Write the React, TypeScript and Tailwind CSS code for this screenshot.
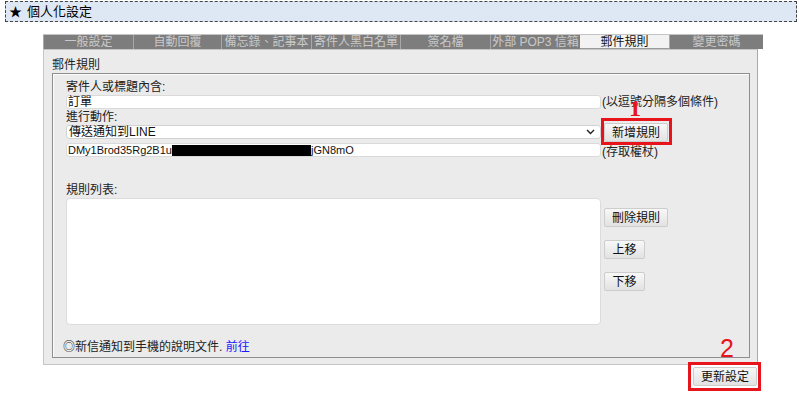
import React from "react";

const font = { fontFamily: '"Liberation Sans", "Noto Sans CJK TC", sans-serif' };

const tabs: { label: string; w: string; active?: boolean }[] = [
  { label: "一般設定", w: "w-[90px]" },
  { label: "自動回覆", w: "w-[88px]" },
  { label: "備忘錄、記事本", w: "w-[90px]" },
  { label: "寄件人黑白名單", w: "w-[89px]" },
  { label: "簽名檔", w: "w-[90px]" },
  { label: "外部 POP3 信箱", w: "w-[90px]" },
  { label: "郵件規則", w: "w-[89px]", active: true },
  { label: "變更密碼", w: "w-[94px]" },
];

function Btn({ children, w }: { children: React.ReactNode; w: string }) {
  return (
    <div
      className={`${w} h-[19px] flex items-center justify-center rounded-[2px] border border-[#cdcdcd] bg-gradient-to-b from-[#f8f8f8] to-[#e2e2e2] text-[12px] text-[#111] leading-none`}
    >
      {children}
    </div>
  );
}

export default function App() {
  return (
    <div className="w-[799px] h-[397px] bg-white text-[#222] overflow-hidden" style={font}>
      {/* header */}
      <div className="mt-[1px] ml-[5px] w-[792px] h-[21px] border border-dashed border-[#444] bg-[#dde8f4] flex items-center pl-[3px] text-[13px] leading-none text-black">
        <span className="mr-[5px]">★</span>
        <span>個人化設定</span>
      </div>

      {/* tabs */}
      <div className="mt-[12px] ml-[43px] w-[720px] border-t border-[#c4c4c4] flex h-[15px]">
        {tabs.map((t, i) => (
          <div
            key={i}
            className={`${t.w} h-[14px] flex items-center justify-center text-[12px] leading-none whitespace-nowrap ${
              t.active
                ? "bg-[#f2f2f2] text-[#111] border-b border-[#9a9a9a]"
                : "bg-[#7d7d7d] text-[#c9c9c9] border-l border-[#a8a8a8]"
            }`}
          >
            {t.label}
          </div>
        ))}
      </div>

      {/* panel */}
      <div className="ml-[43px] w-[715px] h-[316px] bg-[#ebebeb] border border-[#c6c6c6] border-r-[#a8a8a8] pt-[7px] pl-[8px]">
        <div className="h-[16px] leading-[16px] text-[12px] text-[#222]">郵件規則</div>
        <div className="w-[698px] h-[285px] border border-[#8e8e8e] shadow-[inset_1px_1px_0_#fafafa] pl-[13px] pt-[6px] text-[12px]">
          <div className="h-[15px] leading-[15px]">寄件人或標題內含:</div>
          <div className="flex items-center h-[14px]">
            <div className="w-[535px] h-[14px] bg-white border border-[#dadada] rounded-[3px] pl-[1px] leading-[12px] text-[12px] text-[#111]">
              訂單
            </div>
            <span className="ml-[1px] text-[12px] leading-none whitespace-nowrap">(以逗號分隔多個條件)</span>
          </div>
          <div className="h-[16px] leading-[17px]">進行動作:</div>
          <div className="flex items-start h-[18px]">
            <div className="w-[535px] h-[14px] bg-white border border-[#d2d2d2] rounded-[3px] pl-[2px] flex items-center justify-between text-[12px] leading-none text-[#111]">
              <span>傳送通知到LINE</span>
              <svg width="9" height="6" viewBox="0 0 9 6" className="mr-[5px]">
                <path d="M1 1 L4.5 4.5 L8 1" fill="none" stroke="#222" strokeWidth="1.4" />
              </svg>
            </div>
            <div className="relative ml-[3px] -mt-[2px]">
              <Btn w="w-[64px]">新增規則</Btn>
              <div className="absolute left-[-3px] top-[-5px] w-[71px] h-[27px] border-[3px] border-[#e8141c]" />
              <div
                className="absolute z-10 left-[25px] top-[-27px] text-[24px] leading-none font-bold text-[#e8141c]"
                style={{ fontFamily: '"Liberation Serif", serif' }}
              >
                1
              </div>
            </div>
          </div>
          <div className="flex items-center h-[14px]">
            <div className="w-[535px] h-[14px] bg-white border border-[#dadada] rounded-[3px] pl-[1px] flex items-center text-[11px] leading-none text-[#111] whitespace-nowrap overflow-hidden">
              <span>DMy1Brod35Rg2B1u</span>
              <span className="inline-block w-[139px] h-[11px] bg-black" />
              <span>jGN8mO</span>
            </div>
            <span className="ml-[1px] text-[12px] leading-none whitespace-nowrap mt-[4px]">(存取權杖)</span>
          </div>

          <div className="mt-[26px] h-[15px] leading-[15px]">規則列表:</div>
          <div className="flex items-start">
            <div className="w-[535px] h-[127px] bg-white border border-[#dcdcdc] rounded-[4px]" />
            <div className="ml-[3px] mt-[10px] flex flex-col gap-[13px]">
              <Btn w="w-[64px]">刪除規則</Btn>
              <Btn w="w-[41px]">上移</Btn>
              <Btn w="w-[41px]">下移</Btn>
            </div>
          </div>
          <div className="mt-[14px] -ml-[3px] h-[16px] leading-[16px] text-[12px] whitespace-nowrap">
            ◎新信通知到手機的說明文件. <span className="text-[#1a1aff]">前往</span>
          </div>
        </div>
      </div>

      {/* update button */}
      <div className="flex mt-[2px]">
        <div className="relative ml-[693px]">
          <Btn w="w-[64px]">更新設定</Btn>
          <div className="absolute left-[-5px] top-[-5px] w-[73px] h-[29px] border-[3px] border-[#e8141c]" />
          <div
            className="absolute left-[27px] top-[-31px] text-[25px] leading-none text-[#e8141c]"
            style={{ fontFamily: '"Liberation Sans", sans-serif' }}
          >
            2
          </div>
        </div>
      </div>
    </div>
  );
}
